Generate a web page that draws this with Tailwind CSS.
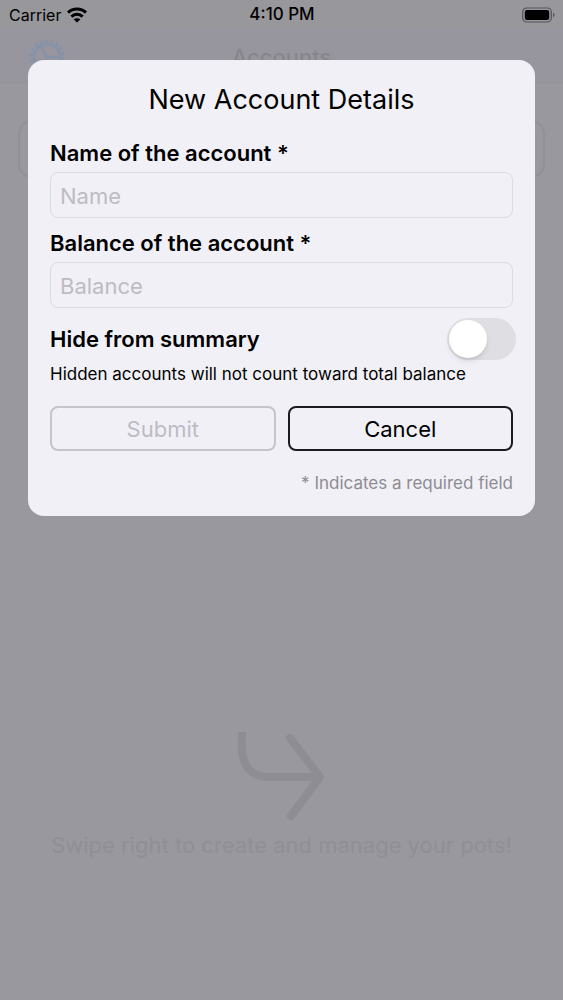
<!DOCTYPE html>
<html lang="en">
<head>
  <meta charset="UTF-8"/>
  <meta name="viewport" content="width=device-width, initial-scale=1.0"/>
  <title>New Account Details</title>
  <script src="https://cdn.jsdelivr.net/npm/@tailwindcss/browser@4"></script>
</head>
<body class="bg-[#99989e] font-['Inter',sans-serif] text-black">

  <div class="relative min-h-screen flex flex-col">

    <!-- Status bar -->
    <header class="grid grid-cols-3 items-center h-[30px] pl-[9px] pr-2 bg-[#98979b]">
      <div class="flex items-center gap-[6px] text-[16px]">
        <span>Carrier</span>
        <svg class="w-5 h-4" viewBox="0 0 20 16" fill="none" stroke="#000" stroke-width="3">
          <path d="M1 5.6a12.8 12.8 0 0 1 18 0"/>
          <path d="M4.4 9.6a8 8 0 0 1 11.2 0"/>
          <path d="M10 15.6 6.7 12.6a4.6 4.6 0 0 1 6.6 0z" fill="#000" stroke="none"/>
        </svg>
      </div>
      <div class="text-center text-[17px] font-medium">4:10 PM</div>
      <svg class="justify-self-end w-[33px] h-4" viewBox="0 0 33 16">
        <rect x="0.7" y="1" width="28.6" height="14" rx="4" fill="none" stroke="#55545a" stroke-width="1.2"/>
        <rect x="2.8" y="3" width="24.4" height="10" rx="2" fill="#000"/>
        <path d="M31 5.5c2 1 2 4 0 5z" fill="#55545a"/>
      </svg>
    </header>

    <!-- Navigation bar -->
    <nav class="grid grid-cols-3 items-center h-[54px] px-[29px] bg-[#97969f] border-b border-[#95949b]">
      <svg class="w-9 h-9" viewBox="0 0 36 36" fill="none" stroke="#8592a8">
        <circle cx="18" cy="18" r="16" stroke-width="3" stroke-dasharray="2.8 2.8"/>
        <circle cx="18" cy="18" r="13" stroke-width="2.5"/>
        <path d="M18 18 11.5 7M18 18h12.5M18 18l-6.5 11" stroke-width="2.5"/>
      </svg>
      <h1 class="text-center text-[22px] leading-8 font-medium text-[#87868b]">Accounts</h1>
    </nav>

    <div class="mx-[18px] mt-9 h-[58px] rounded-[14px] border-2 border-[#919096]"></div>

    <!-- Swipe hint -->
    <div class="mt-auto mb-[140px] flex flex-col items-center text-[#908f95]">
      <svg class="w-[90px] h-[94px]" viewBox="0 0 90 94" fill="none" stroke="#8e8d93" stroke-width="8" stroke-linejoin="round">
        <path d="M5 4v15c0 18 9 30 26 30h50"/>
        <path d="M53 10 83 49 54 88" stroke-linecap="round"/>
      </svg>
      <p class="mt-2 text-[22px] leading-[30px] whitespace-nowrap">Swipe right to create and manage your pots!</p>
    </div>

    <!-- Dialog -->
    <div class="absolute inset-x-0 top-[60px] px-[28px]">
      <form role="dialog" aria-labelledby="dialog-title" class="bg-[#f1f0f7] rounded-2xl px-[22px] pt-[22px] pb-[21px]">
        <h2 id="dialog-title" class="text-center text-[27px] leading-9">New Account Details</h2>

        <label for="name" class="block mt-5 text-[22px] leading-[30px] font-semibold">Name of the account *</label>
        <input id="name" type="text" placeholder="Name" class="block w-full h-[46px] mt-1 px-[9px] pt-[2px] rounded-lg border border-[#dcdbe1] text-[22px] placeholder:text-[#bdbcc3] outline-none"/>

        <label for="balance" class="block mt-[10px] text-[22px] leading-[30px] font-semibold">Balance of the account *</label>
        <input id="balance" type="text" placeholder="Balance" class="block w-full h-[46px] mt-1 px-[9px] pt-[2px] rounded-lg border border-[#dcdbe1] text-[22px] placeholder:text-[#bdbcc3] outline-none"/>

        <div class="flex items-center justify-between mt-[10px] -mr-[3px]">
          <label for="hide" class="text-[22px] leading-[30px] font-semibold">Hide from summary</label>
          <input id="hide" type="checkbox" role="switch" class="appearance-none w-[69px] h-[42px] p-[2px] rounded-full bg-[#dfdee3] before:block before:size-[38px] before:rounded-full before:bg-white before:shadow-md checked:bg-green-500 checked:before:ml-[27px]"/>
        </div>
        <p class="mt-[2px] text-[17px] leading-6 whitespace-nowrap">Hidden accounts will not count toward total balance</p>

        <div class="grid grid-cols-2 gap-3 mt-5">
          <button type="submit" disabled class="h-[45px] pt-[2px] rounded-lg border-2 border-[#c5c4cb] text-[22px] text-[#bdbcc3]">Submit</button>
          <button type="button" class="h-[45px] pt-[2px] rounded-lg border-2 border-[#1c1b20] text-[22px]">Cancel</button>
        </div>

        <p class="mt-5 text-right text-[17px] leading-6 text-[#8d8c92]">* Indicates a required field</p>
      </form>
    </div>

  </div>

</body>
</html>
